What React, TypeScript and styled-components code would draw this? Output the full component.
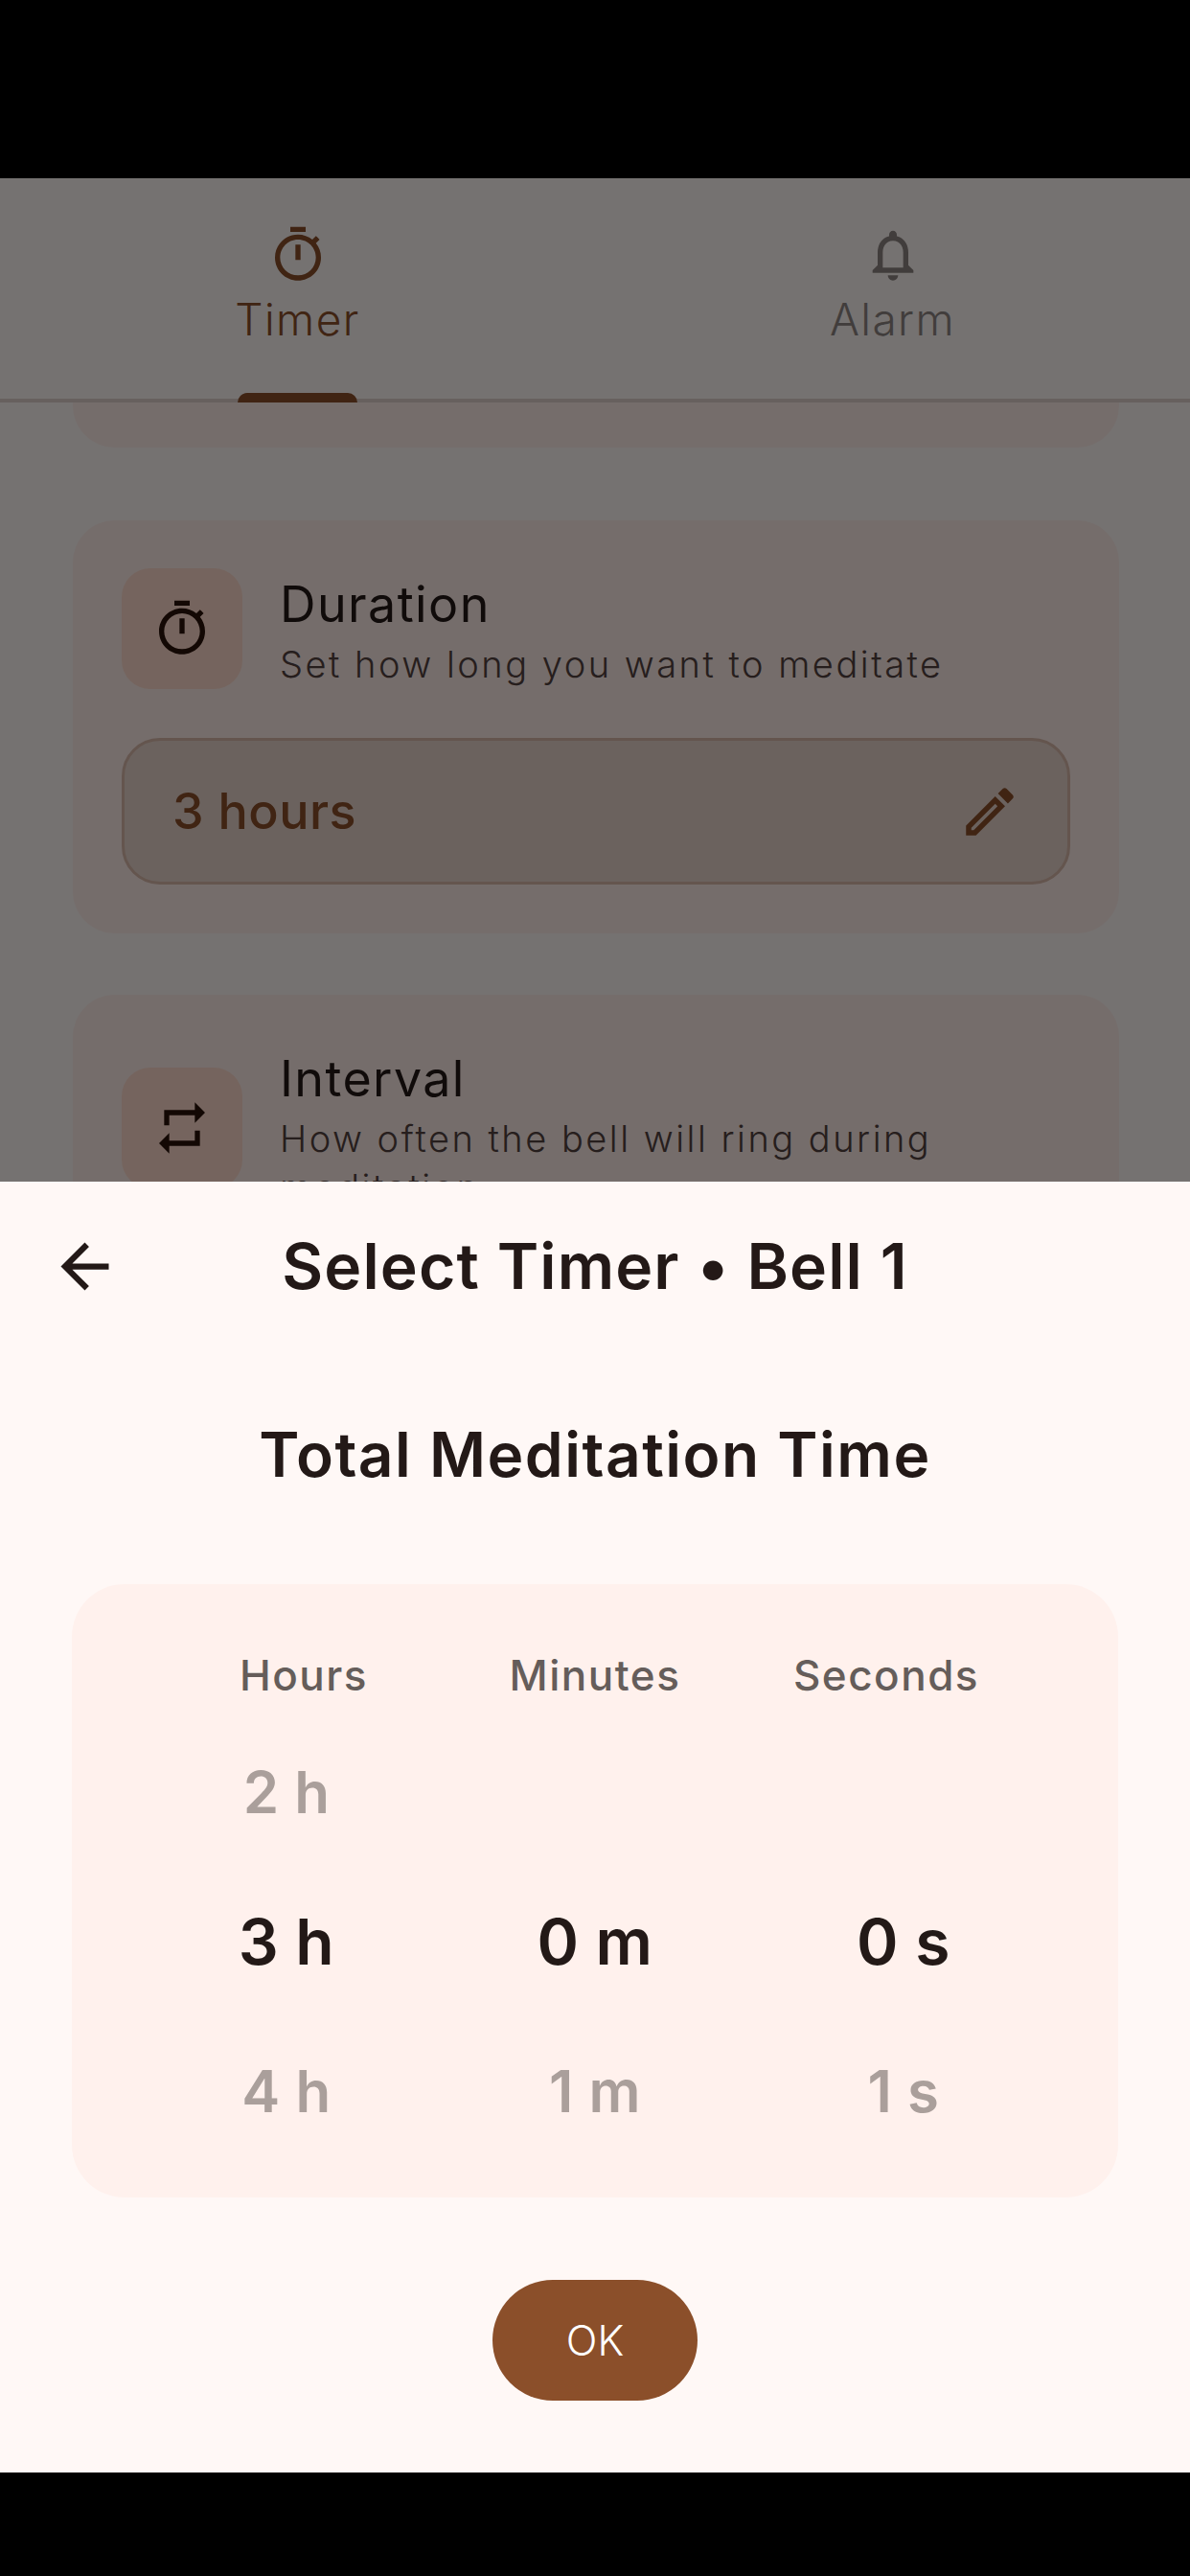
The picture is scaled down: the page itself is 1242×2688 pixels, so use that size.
import styled, { createGlobalStyle } from 'styled-components';

const GlobalStyle = createGlobalStyle`
    html, body {
        margin: 0;
        padding: 0;
        background: #000;
    }
    * {
        box-sizing: border-box;
    }
`;

const font = `Inter, "Noto Sans", sans-serif`;

const TIMER = 'M15 1H9v2h6V1zm-4 13h2V8h-2v6zm8.03-6.61l1.42-1.42c-.43-.51-.9-.99-1.41-1.41l-1.42 1.42C16.07 4.74 14.12 4 12 4c-4.97 0-9 4.03-9 9s4.02 9 9 9 9-4.03 9-9c0-2.12-.74-4.07-1.97-5.61zM12 20c-3.87 0-7-3.13-7-7s3.13-7 7-7 7 3.13 7 7-3.13 7-7 7z';
const BELL = 'M12 22c1.1 0 2-.9 2-2h-4c0 1.1.9 2 2 2zm6-6v-5c0-3.07-1.63-5.64-4.5-6.32V4c0-.83-.67-1.5-1.5-1.5s-1.5.67-1.5 1.5v.68C7.64 5.36 6 7.92 6 11v5l-2 2v1h16v-1l-2-2zm-2 1H8v-6c0-2.48 1.51-4.5 4-4.5s4 2.02 4 4.5v6z';
const EDIT = 'M14.06 9.02l.92.92L5.92 19H5v-.92l9.06-9.06M17.66 3c-.25 0-.51.1-.7.29l-1.83 1.83 3.75 3.75 1.83-1.83c.39-.39.39-1.02 0-1.41l-2.34-2.34c-.2-.2-.45-.29-.71-.29zm-3.6 3.19L3 17.25V21h3.75L17.81 9.94l-3.75-3.75z';
const REPEAT = 'M7 7h10v3l4-4-4-4v3H5v6h2V7zm10 10H7v-3l-4 4 4 4v-3h12v-6h-2v4z';
const BACK = 'M20 11H7.83l5.59-5.59L12 4l-8 8 8 8 1.41-1.41L7.83 13H20v-2z';

const Icon = ({ d, color, size = 64 }: { d: string; color: string; size?: number }) => (
    <svg width={size} height={size} viewBox="0 0 24 24" fill={color}>
        <path d={d} />
    </svg>
);

const columns = [
    { label: 'Hours', prev: '2 h', current: '3 h', next: '4 h' },
    { label: 'Minutes', prev: '', current: '0 m', next: '1 m' },
    { label: 'Seconds', prev: '', current: '0 s', next: '1 s' },
];

export default function App() {
    return (
        <Screen>
            <GlobalStyle />
            <StatusBar />
            <Behind>
                <TabBar>
                    <Tab $active>
                        <Icon d={TIMER} color="#8b4f2a" />
                        <TabLabel $active>Timer</TabLabel>
                        <TabIndicator />
                    </Tab>
                    <Tab>
                        <Icon d={BELL} color="#8f8683" />
                        <TabLabel>Alarm</TabLabel>
                    </Tab>
                </TabBar>
                <Scroller>
                    <CardTail />
                    <Card>
                        <CardHead>
                            <IconBox>
                                <Icon d={TIMER} color="#2a120a" />
                            </IconBox>
                            <CardText>
                                <CardTitle>Duration</CardTitle>
                                <CardSub>Set how long you want to meditate</CardSub>
                            </CardText>
                        </CardHead>
                        <ValueField>
                            <FieldValue>3 hours</FieldValue>
                            <Icon d={EDIT} color="#8b4f2a" size={66} />
                        </ValueField>
                    </Card>
                    <Card>
                        <CardHead>
                            <IconBox>
                                <Icon d={REPEAT} color="#2a120a" />
                            </IconBox>
                            <CardText>
                                <CardTitle>Interval</CardTitle>
                                <CardSub>How often the bell will ring during meditation</CardSub>
                            </CardText>
                        </CardHead>
                    </Card>
                </Scroller>
                <Scrim />
            </Behind>
            <Sheet>
                <SheetHeader>
                    <BackButton>
                        <Icon d={BACK} color="#231917" size={75} />
                    </BackButton>
                    <SheetTitle>Select Timer • Bell 1</SheetTitle>
                </SheetHeader>
                <SectionTitle>Total Meditation Time</SectionTitle>
                <Panel>
                    <HeaderRow>
                        {columns.map((c) => (
                            <ColumnLabel key={c.label}>{c.label}</ColumnLabel>
                        ))}
                    </HeaderRow>
                    <WheelRow>
                        {columns.map((c) => (
                            <Wheel key={c.label}>
                                <WheelItem>{c.prev}</WheelItem>
                                <WheelItem $selected>{c.current}</WheelItem>
                                <WheelItem>{c.next}</WheelItem>
                            </Wheel>
                        ))}
                    </WheelRow>
                </Panel>
                <OkButton>OK</OkButton>
            </Sheet>
            <NavBar />
        </Screen>
    );
}

const Screen = styled.div`
    width: 1242px;
    height: 2688px;
    display: flex;
    flex-direction: column;
    overflow: hidden;
    font-family: ${font};
    background: #000;
`;

const StatusBar = styled.div`
    height: 186px;
    background: #000;
`;

const NavBar = styled.div`
    height: 108px;
    background: #000;
`;

const Behind = styled.div`
    position: relative;
    height: 1047px;
    overflow: hidden;
    background: #fff8f6;
`;

const Scrim = styled.div`
    position: absolute;
    inset: 0;
    background: rgba(0, 0, 0, 0.54);
`;

const TabBar = styled.div`
    height: 234px;
    display: grid;
    grid-template-columns: 1fr 1fr;
    border-bottom: 4px solid #e0d2cd;
`;

const Tab = styled.div<{ $active?: boolean }>`
    position: relative;
    display: flex;
    flex-direction: column;
    align-items: center;
    padding-top: 48px;
`;

const TabLabel = styled.span<{ $active?: boolean }>`
    font-size: 46px;
    line-height: 62px;
    margin-top: 4px;
    font-weight: 300;
    letter-spacing: 1.4px;
    color: ${(p) => (p.$active ? '#8b4f2a' : '#8f8683')};
`;

const TabIndicator = styled.div`
    position: absolute;
    left: 248px;
    bottom: -4px;
    width: 125px;
    height: 10px;
    border-radius: 10px 10px 0 0;
    background: #8b4f2a;
`;

const Scroller = styled.div`
    display: flex;
    flex-direction: column;
    padding: 0 74px 0 76px;
`;

const CardTail = styled.div`
    height: 47px;
    border-radius: 0 0 44px 44px;
    background: #ffede9;
    margin-bottom: 76px;
`;

const Card = styled.div`
    display: flex;
    flex-direction: column;
    gap: 51px;
    padding: 50px 51px 51px;
    border-radius: 44px;
    background: #ffede9;
    margin-bottom: 64px;
`;

const CardHead = styled.div`
    display: flex;
    align-items: center;
    gap: 39px;
`;

const IconBox = styled.div`
    width: 126px;
    height: 126px;
    flex-shrink: 0;
    display: flex;
    align-items: center;
    justify-content: center;
    border-radius: 30px;
    background: #ffdbcc;
`;

const CardText = styled.div`
    display: flex;
    flex-direction: column;
`;

const CardTitle = styled.div`
    font-size: 52px;
    line-height: 75px;
    font-weight: 400;
    letter-spacing: 1.4px;
    color: #231917;
`;

const CardSub = styled.div`
    font-size: 38px;
    line-height: 51px;
    font-weight: 300;
    letter-spacing: 2.5px;
    color: #53433f;
`;

const ValueField = styled.div`
    height: 153px;
    display: flex;
    align-items: center;
    justify-content: space-between;
    padding: 0 48px 0 50px;
    border: 3px solid #d9b9aa;
    border-radius: 40px;
    background: #e9d5cc;
`;

const FieldValue = styled.span`
    font-size: 52px;
    font-weight: 500;
    letter-spacing: 0.5px;
    color: #8b4f2a;
`;

const Sheet = styled.div`
    height: 1347px;
    display: flex;
    flex-direction: column;
    align-items: center;
    background: #fff8f6;
`;

const SheetHeader = styled.div`
    position: relative;
    width: 100%;
    height: 176px;
    display: flex;
    align-items: center;
    justify-content: center;
`;

const BackButton = styled.div`
    position: absolute;
    left: 51px;
    top: 51px;
    height: 75px;
`;

const SheetTitle = styled.h1`
    margin: 0;
    font-size: 66px;
    line-height: 90px;
    font-weight: 600;
    letter-spacing: 1.1px;
    color: #231917;
`;

const SectionTitle = styled.h2`
    margin: 0;
    padding-top: 64px;
    height: 244px;
    font-size: 64px;
    line-height: 90px;
    font-weight: 600;
    letter-spacing: 1.5px;
    color: #231917;
`;

const Panel = styled.div`
    width: 1092px;
    height: 640px;
    padding-top: 64px;
    border-radius: 55px;
    background: #fff1ed;
`;

const HeaderRow = styled.div`
    display: grid;
    grid-template-columns: repeat(3, 304px);
    justify-content: center;
    text-align: center;
`;

const ColumnLabel = styled.div`
    font-size: 44px;
    line-height: 62px;
    font-weight: 500;
    letter-spacing: 1.5px;
    color: #655d5a;
`;

const WheelRow = styled.div`
    display: grid;
    grid-template-columns: repeat(3, 322px);
    justify-content: center;
    margin-top: 13px;
`;

const Wheel = styled.div`
    display: grid;
    grid-template-rows: repeat(3, 156px);
    text-align: center;
`;

const WheelItem = styled.div<{ $selected?: boolean }>`
    display: flex;
    align-items: center;
    justify-content: center;
    font-size: ${(p) => (p.$selected ? '66px' : '60px')};
    font-weight: 600;
    letter-spacing: 0.5px;
    color: ${(p) => (p.$selected ? '#231917' : '#aa9f9b')};
`;

const OkButton = styled.button`
    width: 214px;
    height: 126px;
    margin-top: 86px;
    border: none;
    border-radius: 63px;
    background: #8b4f2a;
    color: #fff;
    font-family: ${font};
    font-size: 43px;
    font-weight: 300;
`;
